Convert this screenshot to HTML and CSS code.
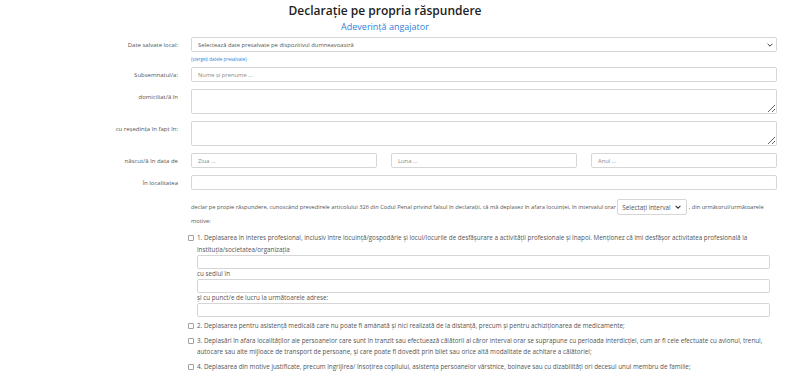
FILE: index.html
```html
<!DOCTYPE html>
<html lang="ro">
<head>
    <meta charset="UTF-8">
    <meta name="viewport" content="width=device-width, initial-scale=1.0">
    <title>Declarație pe propria răspundere</title>
    <link rel="stylesheet" href="styles.css">
</head>
<body>

    <div class="header">
        <h2>Declarație pe propria răspundere</h2>
        <a class="subtitle" href="#">Adeverință angajator</a>
    </div>

    <form class="form">
        <div class="row">
            <label class="label">Date salvate local:</label>
            <div class="field">
                <div class="select-wrap">
                    <select class="control">
                        <option>Selectează date presalvate pe dispozitivul dumneavoastră</option>
                    </select>
                    <svg class="chevron" viewBox="0 0 10 6"><path d="M1 1l4 4 4-4" fill="none" stroke="#333" stroke-width="1.6"/></svg>
                </div>
                <a class="small-link" href="#">(ștergeți datele presalvate)</a>
            </div>
        </div>

        <div class="row">
            <label class="label">Subsemnatul/a:</label>
            <div class="field">
                <input class="control" type="text" placeholder="Nume și prenume ...">
            </div>
        </div>

        <div class="row">
            <label class="label">domiciliat/ă în</label>
            <div class="field">
                <textarea class="control area"></textarea>
            </div>
        </div>

        <div class="row">
            <label class="label">cu reședința în fapt în:</label>
            <div class="field">
                <textarea class="control area"></textarea>
            </div>
        </div>

        <div class="row">
            <label class="label">născut/ă în data de</label>
            <div class="field date-group">
                <input class="control" type="text" placeholder="Ziua ...">
                <input class="control" type="text" placeholder="Luna ...">
                <input class="control" type="text" placeholder="Anul ...">
            </div>
        </div>

        <div class="row">
            <label class="label">În localitatea</label>
            <div class="field">
                <input class="control" type="text">
            </div>
        </div>

        <div class="row">
            <div class="label"></div>
            <div class="field">
                <p class="declare">
                    <span>declar pe propie răspundere, cunoscând prevedirele articolului 326 din Codul Penal privind falsul în declarații, că mă deplasez în afara locuinței, în intervalul orar</span>
                    <span class="interval-wrap">
                        <select class="interval"><option>Selectați interval</option></select>
                        <svg class="chevron small" viewBox="0 0 10 6"><path d="M1 1l4 4 4-4" fill="none" stroke="#333" stroke-width="1.8"/></svg>
                    </span>
                    <span>, din următorul/următoarele</span>
                    <span>motive:</span>
                </p>
            </div>
        </div>

        <div class="reasons">
            <div class="reason">
                <input type="checkbox" class="check">
                <div class="reason-body">
                    <span>1. Deplasarea în interes profesional, inclusiv între locuință/gospodărie și locul/locurile de desfășurare a activității profesionale și înapoi. Menționez că îmi desfășor activitatea profesională la instituția/societatea/organizația</span>
                    <input class="control sub" type="text">
                    <span class="caption">cu sediul în</span>
                    <input class="control sub" type="text">
                    <span class="caption">și cu punct/e de lucru la următoarele adrese:</span>
                    <input class="control sub" type="text">
                </div>
            </div>

            <div class="reason">
                <input type="checkbox" class="check">
                <div class="reason-body">
                    <span>2. Deplasarea pentru asistență medicală care nu poate fi amânată și nici realizată de la distanță, precum și pentru achiziționarea de medicamente;</span>
                </div>
            </div>

            <div class="reason">
                <input type="checkbox" class="check">
                <div class="reason-body">
                    <span>3. Deplasări în afara localităților ale persoanelor care sunt în tranzit sau efectuează călătorii al căror interval orar se suprapune cu perioada interdicției, cum ar fi cele efectuate cu avionul, trenul, autocare sau alte mijloace de transport de persoane, și care poate fi dovedit prin bilet sau orice altă modalitate de achitare a călătoriei;</span>
                </div>
            </div>

            <div class="reason">
                <input type="checkbox" class="check">
                <div class="reason-body">
                    <span>4. Deplasarea din motive justificate, precum îngrijirea/ însoțirea copilului, asistența persoanelor vârstnice, bolnave sau cu dizabilități ori decesul unui membru de familie;</span>
                </div>
            </div>
        </div>
    </form>

</body>
</html>
```

FILE: styles.css
```css
body {
    font-family: 'Open Sans', 'Noto Sans', sans-serif;
    background-color: #ffffff;
    margin: 0;
    padding: 0;
    color: #555;
    font-size: 5.7px;
}

.header {
    text-align: center;
    padding: 3px 30px 0 0;
}

.header h2 {
    margin: 0;
    font-size: 12px;
    font-weight: 600;
    color: #222;
    line-height: 16px;
}

.subtitle {
    display: block;
    margin-top: 1px;
    font-size: 9px;
    line-height: 14px;
    color: #2f7fd8;
    text-decoration: none;
}

.form {
    padding: 3px 23px 0 8px;
}

.row {
    display: flex;
    gap: 13px;
    margin-bottom: 7px;
}

.label {
    width: 170px;
    flex-shrink: 0;
    text-align: right;
    padding-top: 4px;
    line-height: 8px;
    font-size: 6px;
}

.field {
    flex: 1;
    min-width: 0;
}

.control {
    display: block;
    box-sizing: border-box;
    width: 100%;
    height: 15px;
    padding: 0 6px;
    border: 1px solid #d6d6d6;
    border-radius: 2px;
    font-family: inherit;
    font-size: 5.8px;
    color: #555;
    background-color: #fff;
}

.control::placeholder {
    color: #888;
}

.area {
    height: 25px;
    resize: vertical;
}

.select-wrap {
    position: relative;
}

.select-wrap select,
.interval {
    appearance: none;
    -webkit-appearance: none;
}

.chevron {
    position: absolute;
    right: 4px;
    top: 6px;
    width: 6px;
    height: 4px;
}

.small-link {
    display: block;
    font-size: 4.5px;
    line-height: 6px;
    color: #2f7fd8;
    text-decoration: none;
    margin-top: 4px;
    margin-bottom: -2px;
}

.date-group {
    display: flex;
    gap: 14px;
}

.date-group .control {
    flex: 1;
}

.declare {
    margin: 2px 0 -3px 0;
    line-height: 13px;
}

.interval-wrap {
    position: relative;
    display: inline-block;
    vertical-align: middle;
}

.interval {
    display: block;
    width: 70px;
    height: 16px;
    font-family: inherit;
    font-size: 6.3px;
    color: #555;
    border: 1px solid #d6d6d6;
    border-radius: 2px;
    background-color: #fff;
    padding: 0 4px;
}

.chevron.small {
    right: 6px;
    top: 6px;
}

.reasons {
    padding: 0 7px 0 180px;
}

.reason {
    display: flex;
    gap: 3px;
    margin-bottom: 3px;
}

.check {
    appearance: none;
    -webkit-appearance: none;
    width: 6px;
    height: 6px;
    margin: 3px 0 0 0;
    border: 1px solid #a0a0a0;
    border-radius: 1px;
    background-color: #fff;
    flex-shrink: 0;
}

.reason-body {
    flex: 1;
    font-size: 6.3px;
    line-height: 11.5px;
}

.reason-body span {
    display: block;
}

.reason-body .caption {
    line-height: 10px;
}

.sub {
    height: 14px;
}
```
